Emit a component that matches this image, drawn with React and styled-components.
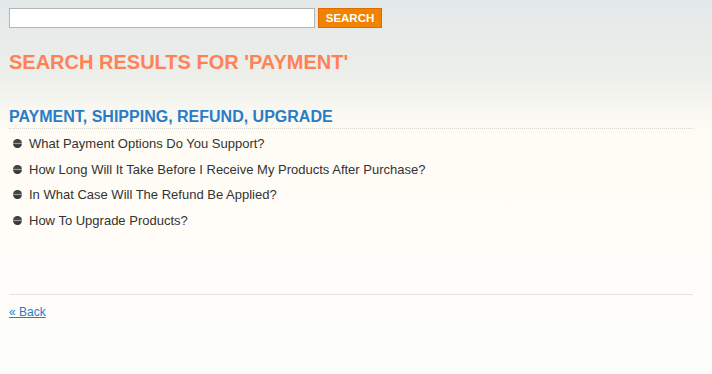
import React from 'react';
import styled, { createGlobalStyle } from 'styled-components';

const GlobalStyle = createGlobalStyle`
  html, body {
    margin: 0;
    padding: 0;
  }
  body {
    min-height: 374px;
    font-family: "Liberation Sans", Arial, sans-serif;
    background:
      linear-gradient(180deg, #e3e8e9 0px, #eceeea 70px, #f8f7f1 110px, #fffcf5 135px, #fffdf9 260px, #fdfdfb 374px);
  }
`;

const Page = styled.div`
  padding: 8px 19px 40px 9px;
`;

const SearchBar = styled.form`
  display: flex;
  align-items: center;
  gap: 3px;
`;

const SearchInput = styled.input`
  box-sizing: border-box;
  width: 306px;
  height: 20px;
  border: 1px solid #b5b5b5;
  background: #fff;
  padding: 0 4px;
  font: 12px "Liberation Sans", Arial, sans-serif;
`;

const SearchButton = styled.button`
  box-sizing: border-box;
  width: 64px;
  height: 20px;
  border: 1px solid #e06a00;
  background: #f28300;
  color: #fff;
  font: bold 11.5px "Liberation Sans", Arial, sans-serif;
  text-transform: uppercase;
  padding: 0;
  cursor: pointer;
`;

const PageTitle = styled.h1`
  margin: 22px 0 0;
  font-size: 20px;
  line-height: 24px;
  font-weight: bold;
  color: #ff8256;
  text-transform: uppercase;
`;

const Category = styled.section`
  margin-top: 33px;
`;

const CategoryTitle = styled.h2`
  margin: 0;
  padding-bottom: 1px;
  font-size: 16px;
  line-height: 20px;
  font-weight: bold;
  color: #2a7cc6;
  text-transform: uppercase;
  border-bottom: 1px dotted #d6d6d2;
`;

const QuestionList = styled.ul`
  list-style: none;
  margin: 2px 0 0;
  padding: 0;
`;

const Question = styled.li`
  display: flex;
  align-items: center;
  gap: 7px;
  height: 25.6px;
  padding-left: 4px;
  font-size: 13px;
  color: #333;
`;

const Bullet = styled.span`
  flex: none;
  width: 9px;
  height: 9px;
  border-radius: 50%;
  background: linear-gradient(180deg, #3a3a3a 0%, #4a4a4a 40%, #9a9a9a 50%, #444 60%, #2e2e2e 100%);
`;

const Footer = styled.div`
  margin-top: 61px;
  border-top: 1px solid #e2e2e0;
  padding-top: 7px;
`;

const BackLink = styled.a`
  font-size: 12px;
  color: #2a7cc6;
  text-decoration: underline;
`;

const questions = [
  'What Payment Options Do You Support?',
  'How Long Will It Take Before I Receive My Products After Purchase?',
  'In What Case Will The Refund Be Applied?',
  'How To Upgrade Products?',
];

export default function App() {
  return (
    <>
      <GlobalStyle />
      <Page>
        <SearchBar onSubmit={(e) => e.preventDefault()}>
          <SearchInput type="text" />
          <SearchButton type="submit">Search</SearchButton>
        </SearchBar>
        <PageTitle>Search results for 'payment'</PageTitle>
        <Category>
          <CategoryTitle>Payment, Shipping, Refund, Upgrade</CategoryTitle>
          <QuestionList>
            {questions.map((q) => (
              <Question key={q}>
                <Bullet />
                {q}
              </Question>
            ))}
          </QuestionList>
        </Category>
        <Footer>
          <BackLink href="#">« Back</BackLink>
        </Footer>
      </Page>
    </>
  );
}
